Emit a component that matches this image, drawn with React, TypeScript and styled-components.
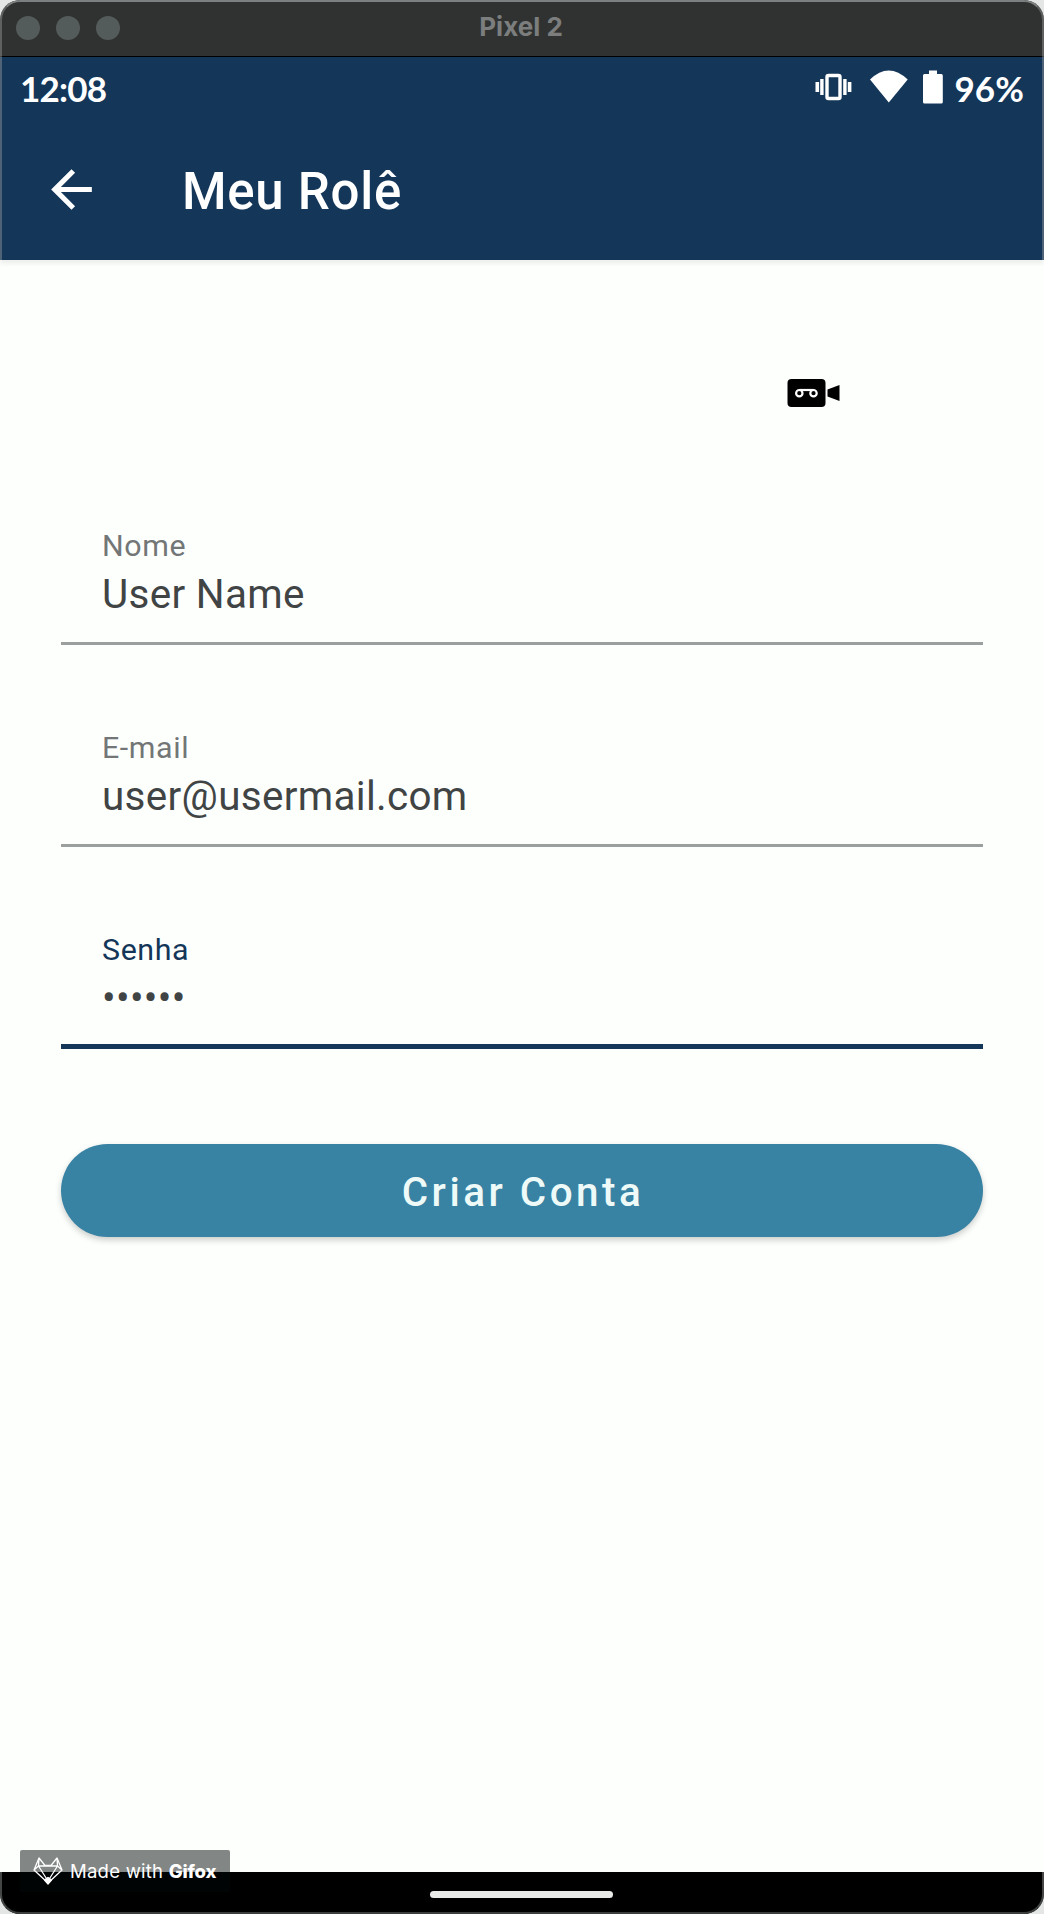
import React from "react";
import styled, { createGlobalStyle } from "styled-components";

const NAVY = "#133659";

const GlobalStyle = createGlobalStyle`
  body { margin: 0; background: #e4e6e5; }
  * { box-sizing: border-box; }
`;

const Window = styled.div`
  position: relative;
  display: flex;
  flex-direction: column;
  width: 1044px;
  height: 1914px;
  border-radius: 20px;
  overflow: hidden;
  background: #fdfffd;
  font-family: Roboto, "Liberation Sans", sans-serif;
`;

const WindowEdge = styled.div`
  position: absolute;
  inset: 0;
  border: 2px solid rgba(150, 156, 155, 0.45);
  border-top-color: #7d8080;
  border-bottom-color: #3c3e3e;
  border-radius: 20px;
  pointer-events: none;
  clip-path: polygon(0 0, 100% 0, 100% 260px, 0 260px, 0 1872px, 100% 1872px, 100% 100%, 0 100%, 0 260px);
`;

const TitleBar = styled.header`
  flex: none;
  display: grid;
  grid-template-columns: 1fr auto 1fr;
  align-items: center;
  height: 57px;
  padding: 0 18px 0 16px;
  background: #303231;
  border-bottom: 1px solid #000;
`;

const TrafficLights = styled.div`
  display: flex;
  gap: 16px;
`;

const Light = styled.span`
  width: 24px;
  height: 24px;
  border-radius: 50%;
  background: #545b5b;
`;

const WindowTitle = styled.div`
  font: 700 26px/30px Inter, sans-serif;
  color: #7c7e7e;
  padding-bottom: 2px;
`;

const StatusBar = styled.div`
  flex: none;
  display: flex;
  justify-content: space-between;
  align-items: center;
  height: 64px;
  padding: 0 20px 2px 20px;
  background: ${NAVY};
  color: #fff;
`;

const StatusText = styled.span<{ $spacing: string }>`
  font: 700 35px/44px Lato, sans-serif;
  letter-spacing: ${(p) => p.$spacing};
`;

const StatusIcons = styled.div`
  display: flex;
  align-items: center;
`;

const StatusGlyphs = styled.svg`
  display: block;
  margin: 0 11px 2px 0;
`;

const AppBar = styled.div`
  flex: none;
  display: flex;
  align-items: center;
  gap: 80px;
  height: 139px;
  padding: 0 0 2px 41px;
  background: ${NAVY};
  color: #fff;
  box-shadow: 0 4px 4px rgba(0, 0, 0, 0.06);
`;

const BackIcon = styled.svg`
  display: block;
  width: 61px;
  height: 61px;
  fill: #fff;
`;

const AppTitle = styled.h1`
  margin: 4px 0 0;
  font-size: 51px;
  line-height: 60px;
  font-weight: 500;
  letter-spacing: 0.7px;
`;

const Content = styled.main`
  flex: 1;
  display: flex;
  flex-direction: column;
  padding: 119px 61px 0;
`;

const CameraIcon = styled.svg`
  display: block;
  margin: 0 0 0 726px;
`;

const Form = styled.form`
  display: flex;
  flex-direction: column;
  padding-top: 94px;
`;

const Field = styled.div<{ $active?: boolean }>`
  display: flex;
  flex-direction: column;
  height: 144px;
  margin-bottom: ${(p) => (p.$active ? "95px" : "58px")};
  padding: 27px 41px 0;
  border-bottom: ${(p) => (p.$active ? `5px solid ${NAVY}` : "3px solid #9b9f9e")};
`;

const Label = styled.label<{ $active?: boolean }>`
  font-size: 30.4px;
  line-height: 36px;
  letter-spacing: 0.6px;
  color: ${(p) => (p.$active ? NAVY : "#737676")};
`;

const Value = styled.div`
  margin-top: 7px;
  font-size: 40.4px;
  line-height: 48px;
  letter-spacing: 0.33px;
  color: #414444;
`;

const Submit = styled.button`
  height: 93px;
  padding: 5px 0 0 2px;
  border: 0;
  border-radius: 47px;
  background: #3882a3;
  color: #eefaf7;
  font: 500 40.4px/48px Roboto, sans-serif;
  letter-spacing: 3.5px;
  box-shadow: 0 3px 6px rgba(0, 0, 0, 0.2);
`;

const NavBar = styled.footer`
  flex: none;
  display: flex;
  justify-content: center;
  height: 42px;
  padding: 19px 2px 0 0;
  background: #000;
`;

const Handle = styled.span`
  width: 183px;
  height: 7px;
  border-radius: 4px;
  background: #e9ebe9;
`;

const Badge = styled.div`
  position: absolute;
  left: 20px;
  bottom: 22px;
  display: flex;
  align-items: center;
  width: 210px;
  height: 42px;
  padding-left: 13px;
  border-radius: 2px;
  background: rgba(2, 8, 8, 0.49);
  color: #fff;
`;

const BadgeText = styled.span`
  margin-left: 7px;
  font: 400 18.5px/24px Inter, sans-serif;
  letter-spacing: 0.25px;
  white-space: pre;
  b {
    font-weight: 800;
    letter-spacing: -0.2px;
  }
`;

const fields = [
  { label: "Nome", value: "User Name" },
  { label: "E-mail", value: "user@usermail.com" },
  { label: "Senha", value: "••••••", active: true },
];

export default function App() {
  return (
    <>
      <GlobalStyle />
      <Window>
        <TitleBar>
          <TrafficLights>
            <Light />
            <Light />
            <Light />
          </TrafficLights>
          <WindowTitle>Pixel 2</WindowTitle>
        </TitleBar>
        <StatusBar>
          <StatusText $spacing="-0.8px">12:08</StatusText>
          <StatusIcons>
            <StatusGlyphs width="128" height="34" viewBox="816 70 128 34" fill="#fff">
              <rect x="828" y="75.5" width="13" height="23" rx="1.5" fill="none" stroke="#fff" strokeWidth="3.4" />
              <path d="M816.5 82h3.6v10h-3.6zM821.2 79h3.4v16h-3.4zM844.2 79h3.4v16h-3.4zM848.8 82h3.6v10h-3.6z" />
              <path d="M871 79.5Q889.7 61.5 908.7 79.5L889.8 102.500Z" />
              <path d="M930 70.500h8v3.500h4.300q1.500 0 1.500 1.500v26.500q0 1.500-1.500 1.500h-16.800q-1.500 0-1.500-1.500v-26.500q0-1.500 1.500-1.500h4.500z" />
            </StatusGlyphs>
            <StatusText $spacing="0.1px">96%</StatusText>
          </StatusIcons>
        </StatusBar>
        <AppBar>
          <BackIcon viewBox="0 0 24 24">
            <path d="M20 11H7.830l5.590-5.590L12 4l-8 8 8 8 1.410-1.410L7.830 13H20v-2z" />
          </BackIcon>
          <AppTitle>Meu Rolê</AppTitle>
        </AppBar>
        <Content>
          <CameraIcon width="54" height="28" viewBox="787 379 54 28">
            <rect x="787.5" y="379" width="38" height="28" rx="4" />
            <path d="M827.500 389.500L839.500 385v16l-12-4.500z" />
            <g fill="none" stroke="#fff" strokeWidth="2.2">
              <circle cx="799.300" cy="393.200" r="3.200" />
              <circle cx="813.500" cy="393.200" r="3.200" />
              <path d="M799.300 390h14.200" />
            </g>
          </CameraIcon>
          <Form>
            {fields.map((f) => (
              <Field key={f.label} $active={f.active}>
                <Label $active={f.active}>{f.label}</Label>
                <Value>{f.value}</Value>
              </Field>
            ))}
            <Submit type="button">Criar Conta</Submit>
          </Form>
        </Content>
        <NavBar>
          <Handle />
        </NavBar>
        <Badge>
          <svg width="30" height="28" viewBox="0 0 30 28" fill="none" stroke="#fff" strokeWidth="1.3" strokeLinejoin="round">
            <path d="M6 1L1 13L15 26L29 13L24 1L18 8.500H12ZM6 1L12 8.500M24 1L18 8.500M6 1L5.500 9L15 24L24.500 9L24 1M1 13L5.500 9H24.500L29 13" />
            <path d="M11.500 23L15 20.500L18.500 23L15 27Z" fill="#fff" />
          </svg>
          <BadgeText>
            Made with <b>Gifox</b>
          </BadgeText>
        </Badge>
        <WindowEdge />
      </Window>
    </>
  );
}
